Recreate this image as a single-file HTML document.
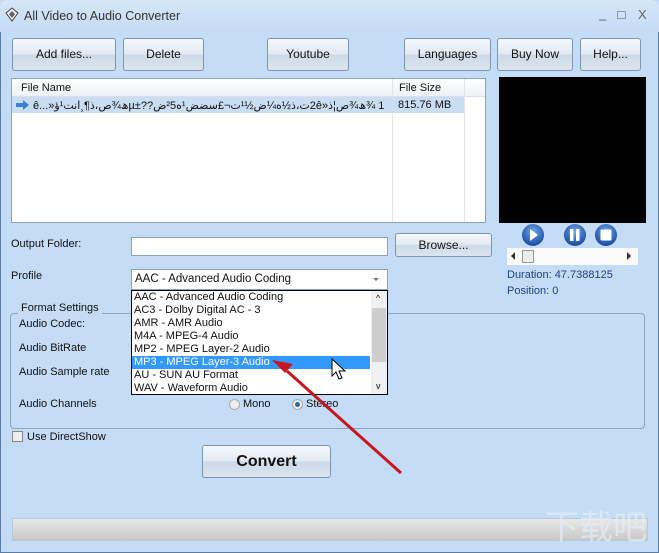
<!DOCTYPE html>
<html><head><meta charset="utf-8"><style>
*{box-sizing:border-box}
html,body{margin:0;width:659px;height:553px;overflow:hidden}
body{background:#c4dcf6;font-family:"Liberation Sans","DejaVu Sans",sans-serif;font-size:11px;color:#111;position:relative}
.a{position:absolute;white-space:nowrap}
.win{position:absolute;left:0;top:0;width:659px;height:553px;border:1px solid #5a7aa0;border-radius:6px 6px 0 0;background:#c4dcf6}
.title{position:absolute;left:0;top:0;width:659px;height:32px;background:linear-gradient(#d6e6f8,#c4dcf6);border-radius:6px 6px 0 0}
.btn{position:absolute;border:1px solid #7d95b0;border-radius:3px;background:linear-gradient(#f4f8fc 0%,#e2eaf3 48%,#cdd9e6 52%,#dbe5ef 100%);text-align:center;font-size:12px;white-space:nowrap}
.box{position:absolute;background:#fff;border:1px solid #8aa4c0}
.item{height:13px;line-height:13px;padding-left:2px;white-space:nowrap;font-size:11px}
</style></head><body>
<div class="win"></div>
<div class="title"></div>
<svg class="a" style="left:4px;top:7px" width="16" height="16" viewBox="0 0 16 16"><path d="M2 6 L8 1 L14 6 L8 14 Z" fill="#eee" stroke="#444"/><path d="M5 7 L8 4 L11 7 L8 11Z" fill="#666"/></svg>
<div class="a" style="left:24px;top:9px;font-size:12.5px;color:#333">All Video to Audio Converter</div>
<div class="a" style="left:599px;top:6px;color:#556;font-size:13px">_</div>
<div class="a" style="left:617px;top:11px;width:9px;height:8px;border:1px solid #999"></div>
<div class="a" style="left:638px;top:7px;color:#666;font-size:13px">X</div>

<div class="btn" style="left:12px;top:38px;width:104px;height:33px;line-height:31px">Add files...</div>
<div class="btn" style="left:123px;top:38px;width:81px;height:33px;line-height:31px">Delete</div>
<div class="btn" style="left:267px;top:38px;width:82px;height:33px;line-height:31px">Youtube</div>
<div class="btn" style="left:404px;top:38px;width:87px;height:33px;line-height:31px">Languages</div>
<div class="btn" style="left:497px;top:38px;width:76px;height:33px;line-height:31px">Buy Now</div>
<div class="btn" style="left:580px;top:38px;width:61px;height:33px;line-height:31px">Help...</div>

<div class="box" style="left:11px;top:78px;width:475px;height:145px">
 <div class="a" style="left:0;top:0;width:473px;height:18px;background:linear-gradient(#fff,#eef2f6);border-bottom:1px solid #dde"></div>
 <div class="a" style="left:9px;top:3px">File Name</div>
 <div class="a" style="left:380px;top:0;width:1px;height:143px;background:#e4e4e4"></div>
 <div class="a" style="left:452px;top:0;width:1px;height:143px;background:#e4e4e4"></div>
 <div class="a" style="left:387px;top:3px">File Size</div>
 <div class="a" style="left:0;top:18px;width:452px;height:16px;background:#c9ddf3"></div>
 <svg class="a" style="left:4px;top:21px" width="14" height="10"><path d="M0 3h7V0l6 5-6 5V7H0z" fill="#3a82d8"/></svg>
 <div class="a" style="left:21px;top:20px;font-size:11px;width:355px;overflow:hidden;unicode-bidi:bidi-override;direction:ltr">ê...»ؤ¹تنا¸¶ذ،ص¾ھµ±??ض²5ه¹ضضس£¬ت¹½ض¼ه½ذ،ت2ê»ذ¦ص¾ھ¾ 1</div>
 <div class="a" style="left:386px;top:20px">815.76 MB</div>
</div>
<div class="a" style="left:499px;top:77px;width:147px;height:146px;background:#000"></div>
<svg class="a" style="left:520px;top:223px" width="100" height="24">
 <defs><radialGradient id="g" cx="50%" cy="35%" r="60%"><stop offset="0" stop-color="#6fa8e8"/><stop offset="1" stop-color="#1d4fa8"/></radialGradient></defs>
 <circle cx="13" cy="12" r="11" fill="url(#g)"/><path d="M10 6l8 6-8 6z" fill="#fff"/>
 <circle cx="55" cy="12" r="11" fill="url(#g)"/><rect x="50" y="6" width="3.5" height="12" fill="#fff"/><rect x="56" y="6" width="3.5" height="12" fill="#fff"/>
 <circle cx="86" cy="12" r="11" fill="url(#g)"/><rect x="80.5" y="6.5" width="11" height="11" rx="1" fill="#fff"/>
</svg>
<div class="a" style="left:507px;top:248px;width:131px;height:17px;background:#fbfbfb"></div>
<div class="a" style="left:511px;top:252px;width:0;height:0;border:4px solid transparent;border-right-color:#333;border-left:0"></div>
<div class="a" style="left:522px;top:250px;width:12px;height:13px;border:1px solid #999;background:#eee"></div>
<div class="a" style="left:627px;top:252px;width:0;height:0;border:4px solid transparent;border-left-color:#333;border-right:0"></div>
<div class="a" style="left:507px;top:269px;color:#1f3f8a">Duration: 47.7388125</div>
<div class="a" style="left:507px;top:285px;color:#1f3f8a">Position: 0</div>

<div class="a" style="left:11px;top:238px">Output Folder:</div>
<div class="box" style="left:131px;top:237px;width:257px;height:19px"></div>
<div class="btn" style="left:395px;top:233px;width:97px;height:24px;line-height:22px">Browse...</div>
<div class="a" style="left:11px;top:270px">Profile</div>

<div class="a" style="left:10px;top:313px;width:635px;height:116px;border:1px solid #8aa4c0;border-radius:4px"></div>
<div class="a" style="left:18px;top:302px;padding:0 3px;background:#c4dcf6">Format Settings</div>
<div class="a" style="left:19px;top:318px">Audio Codec:</div>
<div class="a" style="left:19px;top:342px">Audio BitRate</div>
<div class="a" style="left:19px;top:366px">Audio Sample rate</div>
<div class="a" style="left:19px;top:398px">Audio Channels</div>
<div class="a" style="left:229px;top:399px;width:11px;height:11px;border-radius:50%;border:1px solid #aaa;background:#eee"></div>
<div class="a" style="left:243px;top:398px">Mono</div>
<div class="a" style="left:292px;top:399px;width:11px;height:11px;border-radius:50%;border:1px solid #aaa;background:#eee"></div>
<div class="a" style="left:295px;top:402px;width:5px;height:5px;border-radius:50%;background:#2a6a9a"></div>
<div class="a" style="left:306px;top:398px">Stereo</div>

<div class="box" style="left:131px;top:269px;width:257px;height:21px"></div>
<div class="a" style="left:135px;top:273px;font-size:11.5px">AAC - Advanced Audio Coding</div>
<div class="a" style="left:373px;top:278px;border:3px solid transparent;border-top:3px solid #777"></div>
<div class="a" style="left:131px;top:290px;width:257px;height:105px;background:#fff;border:1px solid #000">
 <div class="a" style="left:0;top:0;width:238px">
  <div class="item">AAC - Advanced Audio Coding</div>
  <div class="item">AC3 - Dolby Digital AC - 3</div>
  <div class="item">AMR - AMR Audio</div>
  <div class="item">M4A - MPEG-4 Audio</div>
  <div class="item">MP2 - MPEG Layer-2 Audio</div>
  <div class="item" style="background:#3399ff;color:#fff">MP3 - MPEG Layer-3 Audio</div>
  <div class="item">AU - SUN AU Format</div>
  <div class="item">WAV - Waveform Audio</div>
 </div>
 <div class="a" style="left:239px;top:0;width:16px;height:103px;background:#f0f0f0"></div>
 <div class="a" style="left:240px;top:17px;width:14px;height:54px;background:#cdcdcd"></div>
 <div class="a" style="left:244px;top:2px;font-size:9px">^</div>
 <div class="a" style="left:244px;top:90px;font-size:9px">v</div>
</div>
<svg class="a" style="left:330px;top:358px" width="16" height="24"><path d="M2 1v17l4-4 3 7 3-1-3-7h6z" fill="#fff" stroke="#000"/></svg>
<svg class="a" style="left:0;top:0" width="659" height="553"><line x1="401" y1="473" x2="287" y2="371" stroke="#c8161d" stroke-width="3"/><path d="M272 360l21 4-8 9z" fill="#c8161d"/></svg>

<div class="a" style="left:12px;top:431px;width:11px;height:11px;border:1px solid #888;background:#eee"></div>
<div class="a" style="left:27px;top:431px">Use DirectShow</div>
<div class="btn" style="left:202px;top:445px;width:129px;height:33px;line-height:31px;font-size:16px;font-weight:bold">Convert</div>
<div class="a" style="left:12px;top:518px;width:636px;height:23px;border:1px solid #b8c8d8;background:linear-gradient(#e8e8e8,#c8c8c8)"></div>
<div class="a" style="left:545px;top:505px;font-size:34px;line-height:40px;color:#e6eef6;opacity:.7;font-family:'Noto Sans CJK SC',sans-serif">下载吧</div>
</body></html>
